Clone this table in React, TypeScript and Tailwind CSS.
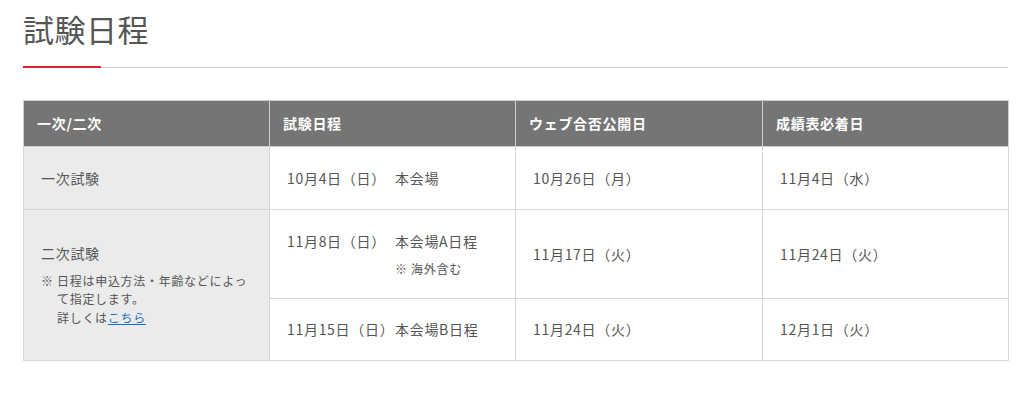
export default function App() {
  return (
    <div className="w-[1024px] h-[400px] bg-white text-[#555] font-['Noto_Sans_CJK_JP',sans-serif] overflow-hidden">
      <div className="px-[23px] pt-[9px]">
        {/* Heading */}
        <h1 className="text-[31px] leading-[40px] font-normal text-[#555] tracking-[0.5px]">試験日程</h1>
        <div className="mt-[17px] flex items-center w-[985px]">
          <div className="w-[78px] h-[2px] bg-[#e3232a]" />
          <div className="flex-1 h-px bg-[#cfcfcf]" />
        </div>

        {/* Schedule table */}
        <table className="mt-[32px] w-[985px] border-collapse table-fixed text-[14px] tracking-[0.05em]">
          <thead>
            <tr className="h-[46px] bg-[#757575] text-white text-left font-bold">
              <th className="w-[246px] border border-[#cfcfcf] pl-[13px] font-bold">一次/二次</th>
              <th className="w-[246px] border border-[#cfcfcf] pl-[13px] font-bold">試験日程</th>
              <th className="w-[247px] border border-[#cfcfcf] pl-[13px] font-bold">ウェブ合否公開日</th>
              <th className="w-[246px] border border-[#cfcfcf] pl-[13px] font-bold">成績表必着日</th>
            </tr>
          </thead>
          <tbody>
            <tr className="h-[63px]">
              <td className="border border-[#d6d6d6] bg-[#ebebeb] pl-[17px]">一次試験</td>
              <td className="border border-[#d6d6d6] pl-[17px]">
                <div className="flex">
                  <span className="w-[108px]">10月4日（日）</span>
                  <span>本会場</span>
                </div>
              </td>
              <td className="border border-[#d6d6d6] pl-[17px]">10月26日（月）</td>
              <td className="border border-[#d6d6d6] pl-[17px]">11月4日（水）</td>
            </tr>
            <tr className="h-[89px]">
              <td rowSpan={2} className="border border-[#d6d6d6] bg-[#ebebeb] pl-[17px] pr-[4px]">
                <p className="leading-[20px]">二次試験</p>
                <p className="mt-[9px] text-[12px] leading-[18.5px] pl-[16px] -indent-[16px]">
                  ※ 日程は申込方法・年齢などによっ
                  <br />
                  て指定します。
                  <br />
                  詳しくは<a href="#" className="text-[#1a6fc4] underline">こちら</a>
                </p>
              </td>
              <td className="border border-[#d6d6d6] pl-[17px]">
                <div className="flex">
                  <span className="w-[108px]">11月8日（日）</span>
                  <div>
                    <p className="leading-[20px]">本会場A日程</p>
                    <p className="mt-[9px] text-[12px] leading-[18px]">※ 海外含む</p>
                  </div>
                </div>
              </td>
              <td className="border border-[#d6d6d6] pl-[17px]">11月17日（火）</td>
              <td className="border border-[#d6d6d6] pl-[17px]">11月24日（火）</td>
            </tr>
            <tr className="h-[62px]">
              <td className="border border-[#d6d6d6] pl-[17px]">
                <div className="flex">
                  <span className="w-[108px] whitespace-nowrap">11月15日（日）</span>
                  <span>本会場B日程</span>
                </div>
              </td>
              <td className="border border-[#d6d6d6] pl-[17px]">11月24日（火）</td>
              <td className="border border-[#d6d6d6] pl-[17px]">12月1日（火）</td>
            </tr>
          </tbody>
        </table>
      </div>
    </div>
  );
}
